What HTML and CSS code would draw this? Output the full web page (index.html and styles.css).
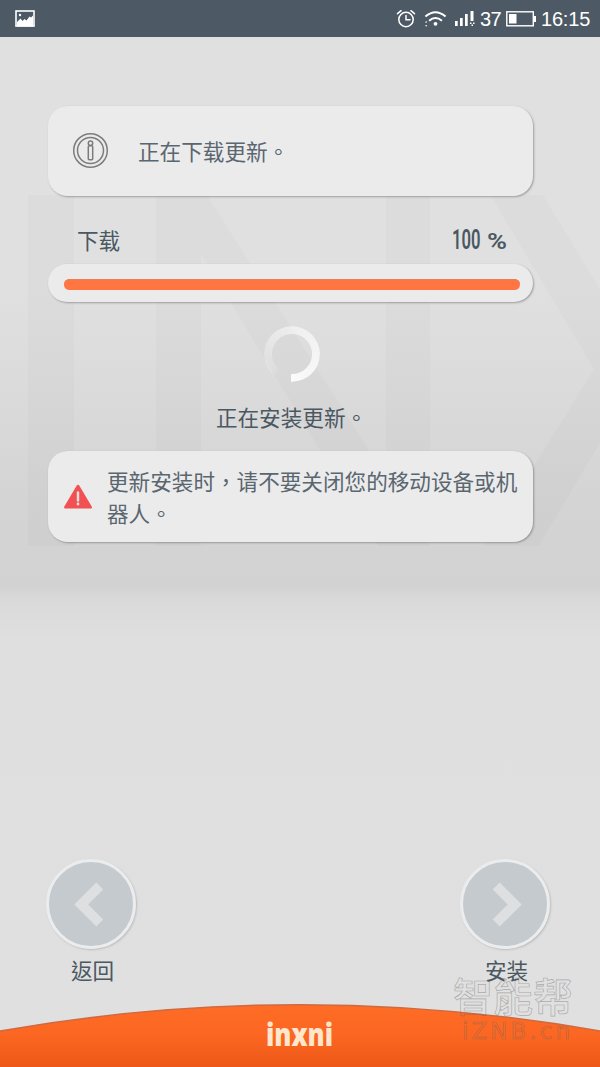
FILE: index.html
```html
<!DOCTYPE html>
<html lang="zh-Hant">
<head>
<meta charset="utf-8">
<title>更新</title>
<link rel="stylesheet" href="styles.css">
</head>
<body>
<div class="screen">
  <svg class="backdrop" viewBox="0 0 600 400" aria-hidden="true">
    <path d="M28 15h46v351H28zM156 15h51L430 366H378L201 74V366H156zM386 15h44v351h-44zM490 15h53L600 109V263L539 366H484L594 189z"/>
  </svg>

  <header class="status">
    <svg class="status-picture" viewBox="0 0 20 17"><rect x="1" y="1" width="18" height="15" fill="none" stroke="#fff" stroke-width="1.6"/><path fill="#fff" d="M2 12l3.500-3.500 2 2.500 2-2 2 1.500 3-4 1.500 1 2-2v11H2z"/><circle cx="5" cy="5" r="1.2" fill="#fff"/></svg>
    <div class="status-right">
      <svg class="status-alarm" viewBox="0 0 20 20" fill="none" stroke="#fff" stroke-width="1.5" stroke-linecap="round"><circle cx="10" cy="10.500" r="7.2"/><path d="M10 6.500v4.2h4M1.5 4.700l3.6-3M18.500 4.700l-3.600-3"/></svg>
      <svg class="status-wifi" viewBox="0 0 24 18"><g fill="none" stroke="#fff" stroke-width="2.100"><path d="M1.500 6.500Q12-2.600 22.500 6.500M5.300 10.800Q12 5 18.700 10.800"/></g><circle cx="12" cy="14" r="2" fill="#fff"/><path d="M2.300 11l1.200 1.600H1zM2.300 17l1.200-1.600H1z" fill="#fff"/></svg>
      <svg class="status-signal" viewBox="0 0 20 17" fill="#fff"><path d="M0 11h2.700v5H0zM5 8h2.700v8H5zM10 4h2.700v12H10zM15.500 1h3v10h-3zM15 12.500h1.500V14H15zM18 12.500h1.500V14H18zM16.500 14.500h1.500V16h-1.500z"/></svg>
      <span class="battery-level">37</span>
      <svg class="status-battery" viewBox="0 0 30 16"><rect x=".8" y=".8" width="26.500" height="14" fill="none" stroke="#fff" stroke-width="1.400"/><path d="M3 3h7.500v9.500H3zM28 5h2v6h-2z" fill="#fff"/></svg>
      <span class="clock">16:15</span>
    </div>
  </header>

  <main class="content">
    <section class="card notice">
      <svg class="info" viewBox="0 0 36 36" fill="none" stroke="#7c7c7c" stroke-width="1.500"><circle cx="17.500" cy="17.500" r="16.800"/><circle cx="17.500" cy="17.500" r="13"/><circle cx="17.500" cy="10.200" r="2.200"/><rect x="15.300" y="12.700" width="4.400" height="14" rx="1"/></svg>
      <p>正在下载更新。</p>
    </section>

    <div class="progress-head">
      <span>下载</span>
      <svg class="percent" viewBox="0 0 58 26"><text x="1" y="23" textLength="28.500" lengthAdjust="spacingAndGlyphs" font-size="27">100</text><text x="36" y="23" textLength="20" lengthAdjust="spacingAndGlyphs" font-size="22">%</text></svg>
    </div>
    <div class="track"><div class="fill"></div></div>

    <div class="spinner"></div>
    <p class="installing">正在安装更新。</p>

    <section class="card warning">
      <svg class="alert" viewBox="0 0 30 26"><path d="M15 2L27.700 23.300H2.300z" fill="#f15152" stroke="#f15152" stroke-width="2.600" stroke-linejoin="round"/><path d="M15 8.500v8" stroke="#f3dede" stroke-width="2.400" stroke-linecap="round"/><circle cx="15" cy="20" r="1.400" fill="#f3dede"/></svg>
      <p>更新安装时，请不要关闭您的移动设备或机器人。</p>
    </section>
  </main>

  <nav class="actions">
    <div class="action"><div class="round"><svg viewBox="0 0 86 86"><path d="M52 24.500L33 43.500l19 19"/></svg></div><span>返回</span></div>
    <div class="action"><div class="round"><svg viewBox="0 0 86 86"><path d="M34 24.500l19 19-19 19"/></svg></div><span>安装</span></div>
  </nav>

  <footer class="footer">
    <svg viewBox="0 0 600 64">
      <defs><linearGradient id="orange" x1="0" y1="0" x2="0" y2="1"><stop offset="0" stop-color="#ff6c26"/><stop offset=".5" stop-color="#fb6722"/><stop offset="1" stop-color="#ed5717"/></linearGradient></defs>
      <path d="M0 28Q300-24.500 600 28V64H0z" fill="url(#orange)"/>
      <path d="M0 28Q300-24.500 600 28" fill="none" stroke="#cf6a40" stroke-width="1.500"/>
      <text class="logo" x="266" y="43" textLength="67" lengthAdjust="spacingAndGlyphs">inxni</text>
    </svg>
  </footer>

  <svg class="watermark" viewBox="0 0 130 74">
    <text class="mark-name" x="3" y="38" textLength="120">智能帮</text>
    <text class="mark-site" x="12" y="65" textLength="108">iZNB.cn</text>
  </svg>
</div>
</body>
</html>
```

FILE: styles.css
```css
* { box-sizing: border-box; }
body { margin: 0; }
p { margin: 0; }
svg { display: block; flex: none; overflow: visible; }

.screen {
  position: relative;
  display: flex;
  flex-direction: column;
  width: 600px;
  height: 1067px;
  overflow: hidden;
  color: #4a5862;
  font: 21.6px/32px "Noto Sans CJK TC", sans-serif;
  background: linear-gradient(#e0e0e0 0, #e0e0e0 290px, #dadada 400px, #d4d4d4 500px, #d2d2d2 586px, #dadada 602px, #dfdfdf 640px, #e0e0e0 100%);
}
.backdrop {
  position: absolute;
  top: 180px;
  left: 0;
  width: 600px;
  height: 400px;
  fill: rgba(0, 0, 0, .014);
}

.status {
  display: flex;
  align-items: center;
  justify-content: space-between;
  height: 37px;
  padding: 0 10px 0 15px;
  background: #4d5a65;
  color: #fff;
  font: 20px/37px "Liberation Sans", sans-serif;
}
.status-picture { width: 20px; height: 17px; }
.status-right { display: flex; align-items: center; }
.status-alarm { width: 20px; height: 20px; margin-right: 8px; }
.status-wifi { width: 23px; height: 18px; margin-right: 8px; }
.status-signal { width: 20px; height: 17px; margin-right: 5px; }
.battery-level { width: 21px; padding-top: 2px; letter-spacing: -.5px; margin-right: 5px; }
.status-battery { width: 30px; height: 16px; margin-right: 5px; }
.clock { width: 49px; padding-top: 2px; letter-spacing: -.2px; }

.content {
  position: relative;
  display: flex;
  flex-direction: column;
  align-items: center;
  width: 485px;
  margin: 69px 0 0 48px;
}
.card {
  display: flex;
  align-items: center;
  width: 100%;
  border-radius: 20px;
  background: #ebebeb;
  box-shadow: 1px 1px 2px rgba(80, 80, 80, .45);
  color: #5a6670;
}
.notice { height: 90px; padding-left: 25px; gap: 29px; }
.info { width: 36px; height: 36px; }

.progress-head {
  display: flex;
  justify-content: space-between;
  align-items: center;
  width: 100%;
  height: 68px;
  padding: 20px 24px 0 29px;
}
.percent {
  width: 58px;
  height: 26px;
  margin-top: -2px;
  fill: #4a5862;
  font-family: Roboto, sans-serif;
  font-weight: 600;
}
.track {
  width: 100%;
  height: 38px;
  padding: 15px 13px 0 16px;
  border-radius: 20px;
  background: #ebebeb;
  box-shadow: 1px 1px 2px rgba(80, 80, 80, .45);
}
.fill {
  height: 11px;
  border-radius: 6px;
  background: #ff7643;
  box-shadow: inset 0 1px #e77f59;
}
.spinner {
  width: 56px;
  height: 56px;
  margin: 24px 0 19px 3px;
  border-radius: 50%;
  background: conic-gradient(from 183deg, transparent 0 30deg, rgba(255, 255, 255, .16) 45deg, rgba(255, 255, 255, .5) 170deg, #fafafa 357deg);
  mask: radial-gradient(circle, transparent 19.500px, #000 20.500px);
}
.installing { height: 50px; padding-left: 2px; }
.warning { height: 91px; padding: 0 13px 0 15px; gap: 14px; }
.alert { width: 30px; height: 26px; }

.actions {
  display: flex;
  justify-content: space-between;
  margin-top: 317px;
  padding: 0 50px 0 46px;
}
.action { display: flex; flex-direction: column; align-items: center; width: 90px; }
.action span { margin: 5px 0 0 3px; }
.round {
  width: 90px;
  height: 90px;
  border: 3px solid #ebeced;
  border-radius: 50%;
  background: #c5cacf;
  box-shadow: 1px 1px 2px rgba(110, 110, 110, .3);
}
.round svg { width: 84px; height: 84px; fill: none; stroke: #dedfe0; stroke-width: 10px; stroke-linejoin: miter; }

.footer { margin-top: auto; }
.footer svg { width: 600px; height: 64px; }
.logo { font: 800 31px "Open Sans", sans-serif; fill: #ffe6cd; }

.watermark { position: absolute; left: 450px; top: 974px; width: 130px; height: 74px; fill: none; stroke: rgba(100, 100, 100, .45); stroke-width: .7px; }
.mark-name { font: 500 40px "Noto Sans CJK SC", sans-serif; }
.mark-site { font: 23px "DejaVu Sans", sans-serif; }
```
